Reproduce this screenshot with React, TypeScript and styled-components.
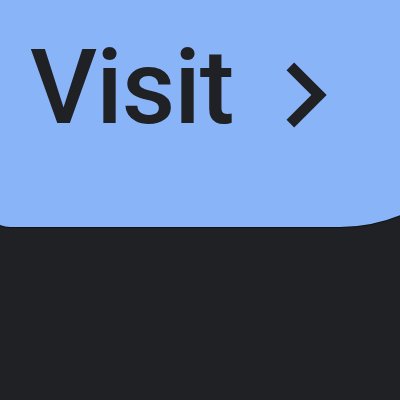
import styled, { createGlobalStyle } from "styled-components";

const GlobalStyle = createGlobalStyle`
  html, body {
    margin: 0;
    padding: 0;
    background: #202124;
    overflow: hidden;
    height: 100%;
  }
  #root {
    height: 100%;
  }
`

const Page = styled.div`
  height: 400px;
  background: #202124;
  overflow: hidden;
`

const VisitLink = styled.a`
  display: flex;
  flex-shrink: 0;
  align-items: flex-start;
  gap: 7px;
  box-sizing: border-box;
  width: 512px;
  height: 227px;
  margin-left: -14px;
  padding: 30px 0 0 44px;
  border-radius: 0 0 158px 24px;
  background: #8ab4f8;
  box-shadow: 0 1px 1px rgba(0, 0, 0, 0.45);
  color: #202124;
  text-decoration: none;
  cursor: pointer;
`

const Label = styled.span`
  margin-top: 6px;
  font-family: Roboto, "Liberation Sans", sans-serif;
  font-size: 104px;
  font-weight: 500;
  line-height: 1;
  letter-spacing: -1px;
`

const Chevron = ({ size }: { size: number }) => (
  <svg width={size} height={size} viewBox="0 0 24 24" fill="currentColor" aria-hidden>
    <path d="M10 6L8.59 7.41 13.17 12l-4.58 4.59L10 18l6-6z" />
  </svg>
)

export default function App() {
  return (
    <Page>
      <GlobalStyle />
      <VisitLink href="#">
        <Label>Visit</Label>
        <Chevron size={130} />
      </VisitLink>
    </Page>
  )
}
